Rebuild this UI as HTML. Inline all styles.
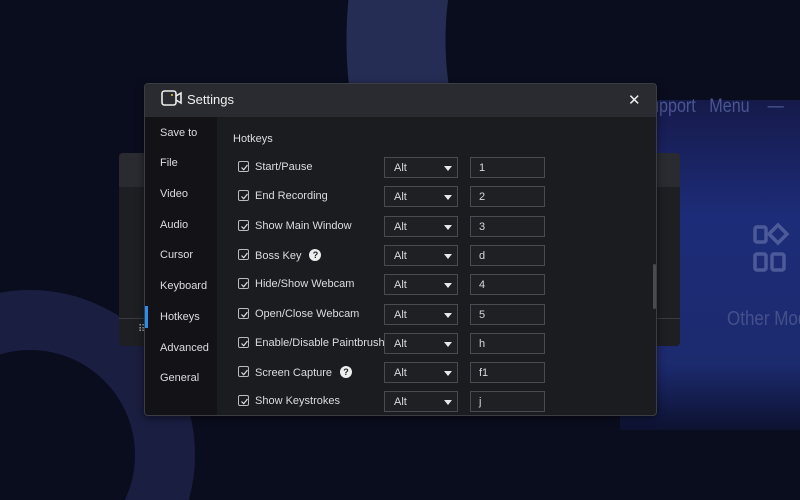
<!DOCTYPE html>
<html style="width:800px;height:500px;overflow:hidden"><head><style>
*{margin:0;padding:0;box-sizing:border-box}
body{width:800px;height:500px;overflow:hidden;background:#0a0d1e;font-family:"Liberation Sans",sans-serif;position:relative;color:#d8d8dc}
.abs{position:absolute}
.lbl{font-size:11px;color:#dcdce0;white-space:nowrap}
.cb{position:absolute;width:11px;height:11px;border:1px solid #bbb;border-radius:2px}
.cb svg{position:absolute;left:1px;top:1px}
.sel{position:absolute;left:384px;width:74px;height:21px;border:1px solid #4a4b50;background:#1f2024;font-size:11px;padding:4px 0 0 9px}
.sel:after{content:"";position:absolute;right:5px;top:8px;border-left:4px solid transparent;border-right:4px solid transparent;border-top:5px solid #e8e8e8}
.inp{position:absolute;left:470px;width:75px;height:21px;border:1px solid #4a4b50;background:#1f2024;font-size:11px;padding:4px 0 0 8px}
.q{display:inline-block;width:12px;height:12px;border-radius:50%;background:#eee;color:#1b1c20;font-size:9px;font-weight:bold;text-align:center;line-height:12px;margin-left:8px;vertical-align:1px}
.nav{position:absolute;left:160px;font-size:11px;color:#dcdce0}
</style></head><body>
<svg class="abs" style="left:0;top:0" width="800" height="500">
<defs><linearGradient id="bl" x1="0" y1="0" x2="0" y2="1"><stop offset="0" stop-color="#161a4a"/><stop offset=".35" stop-color="#1d2c78"/><stop offset=".8" stop-color="#1c2a6e"/><stop offset="1" stop-color="#0d1230"/></linearGradient></defs>
<rect x="620" y="100" width="180" height="330" fill="url(#bl)"/>
<circle cx="760" cy="40" r="364" fill="none" stroke="#262d54" stroke-width="99" clip-path="url(#c)"/>
<clipPath id="c"><rect x="0" y="0" width="620" height="200"/></clipPath>
<circle cx="30" cy="455" r="135" fill="none" stroke="#1a1e40" stroke-width="60"/>
</svg>
<div class="abs" style="left:650px;top:96px;font-size:19px;color:#4a5690;white-space:nowrap;transform:scaleX(.85);transform-origin:left">upport &nbsp; Menu &nbsp; &nbsp;—</div>
<svg class="abs" style="left:752px;top:222px" width="40" height="56" viewBox="0 0 40 56"><g fill="none" stroke="#4c5a9a" stroke-width="3.5"><rect x="3" y="5" width="11" height="15" rx="2"/><path d="M26 3 L35 12 L26 21 L17 12 Z"/><rect x="3" y="32" width="11" height="16" rx="2"/><rect x="20" y="32" width="12" height="16" rx="2"/></g></svg>
<div class="abs" style="left:727px;top:308px;font-size:20px;color:#45508a;white-space:nowrap;transform:scaleX(.85);transform-origin:left">Other Mod</div>
<div class="abs" style="left:119px;top:153px;width:561px;height:193px;background:#1e1f23;border-radius:4px;overflow:hidden">
<div style="height:34px;background:#2a2b30"></div>
<div class="abs" style="left:0;top:165px;width:561px;height:1px;background:#3a3b40"></div>
</div>
<div class="abs" style="left:651px;top:160px;font-size:14px;color:#ccc">‹</div>
<div class="abs" style="left:138px;top:324px;font-size:10px;color:#aaa">⠿</div>
<div class="abs" style="left:144px;top:83px;width:513px;height:333px;background:#1b1c20;border:1px solid #3c3d42;border-radius:4px;overflow:hidden;box-shadow:0 2px 8px rgba(0,0,0,.5)">
<div style="height:33px;background:#2a2b30"></div>
<div class="abs" style="left:0;top:33px;width:72px;height:300px;background:#131317"></div>
<div class="abs" style="left:0;top:222px;width:3px;height:22px;background:#2d8cf0"></div>
<div class="abs" style="left:508px;top:180px;width:3px;height:45px;background:#4a4b50;border-radius:2px"></div>
</div>
<svg class="abs" style="left:161px;top:90px" width="22" height="17" viewBox="0 0 22 17"><rect x="1" y="1" width="14" height="14" rx="2.5" fill="none" stroke="#eee" stroke-width="1.6"/><path d="M15 6 L20 3 V13 L15 10" fill="none" stroke="#eee" stroke-width="1.6"/><circle cx="11" cy="5" r="1" fill="#f0c040"/></svg>
<div class="abs" style="left:187px;top:92px;font-size:13px;color:#eee">Settings</div>
<div class="abs" style="left:628px;top:91px;font-size:15px;color:#eee">✕</div>
<div class="nav" style="top:127px">Save to</div>
<div class="nav" style="top:157px">File</div>
<div class="nav" style="top:188px">Video</div>
<div class="nav" style="top:219px">Audio</div>
<div class="nav" style="top:249px">Cursor</div>
<div class="nav" style="top:280px">Keyboard</div>
<div class="nav" style="top:311px">Hotkeys</div>
<div class="nav" style="top:342px">Advanced</div>
<div class="nav" style="top:372px">General</div>
<div class="abs lbl" style="left:233px;top:133px">Hotkeys</div>
<div id="rows"></div>
<script>
var r=[["Start/Pause","1"],["End Recording","2"],["Show Main Window","3"],["Boss Key","d",1],["Hide/Show Webcam","4"],["Open/Close Webcam","5"],["Enable/Disable Paintbrush","h"],["Screen Capture","f1",1],["Show Keystrokes","j"]];
var h="";
r.forEach(function(x,i){var y=Math.round(167+i*29.3);
h+='<div class="cb" style="left:238px;top:'+(y-6)+'px"><svg width="9" height="9" viewBox="0 0 9 9"><path d="M1.5 4.5 L3.7 6.7 L7.5 2" fill="none" stroke="#ddd" stroke-width="1.2"/></svg></div>';
h+='<div class="abs lbl" style="left:255px;top:'+(y-6)+'px">'+x[0]+(x[2]?'<span class="q">?</span>':'')+'</div>';
h+='<div class="sel" style="top:'+(y-10)+'px">Alt</div><div class="inp" style="top:'+(y-10)+'px">'+x[1]+'</div>';});
document.getElementById("rows").innerHTML=h;
</script>
</body></html>
